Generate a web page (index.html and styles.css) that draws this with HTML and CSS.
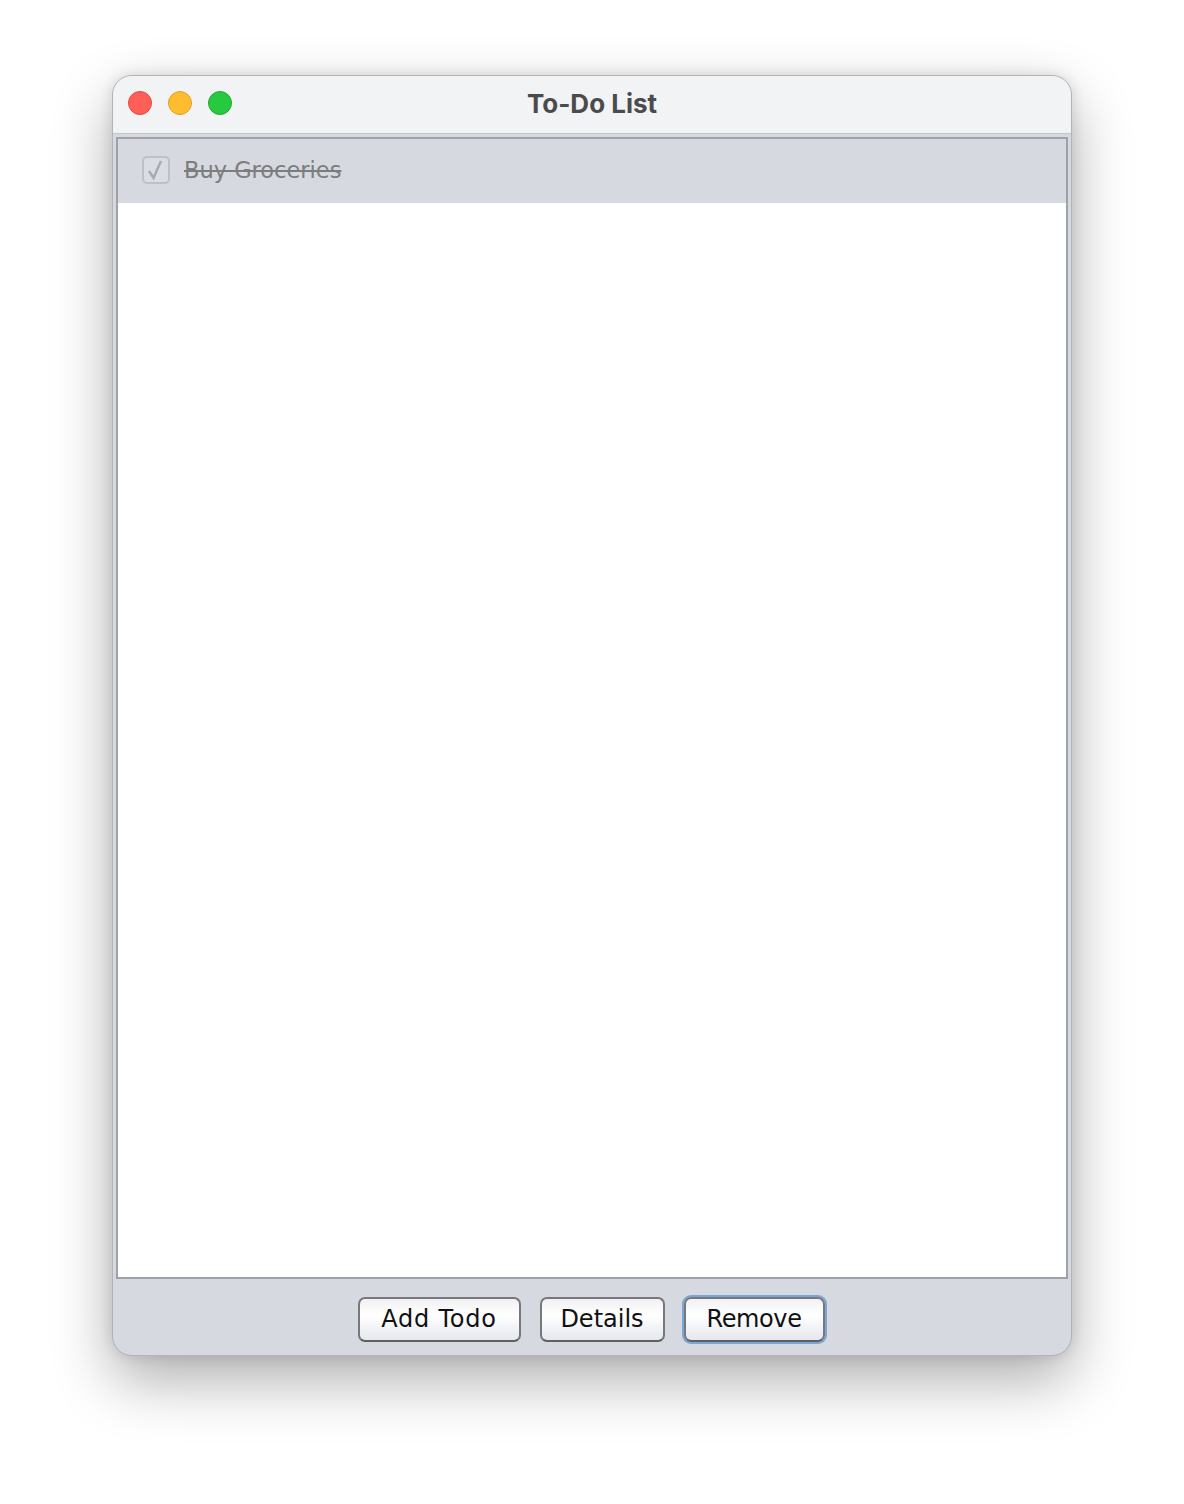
FILE: index.html
```html
<!DOCTYPE html>
<html lang="en">
<head>
<meta charset="utf-8">
<title>To-Do List</title>
<link rel="stylesheet" href="styles.css">
</head>
<body>
<div class="window">
  <div class="titlebar">
    <div class="lights">
      <span class="light red"></span>
      <span class="light yellow"></span>
      <span class="light green"></span>
    </div>
    <div class="title">To-Do List</div>
  </div>
  <div class="content">
    <div class="list">
      <div class="row selected">
        <span class="checkbox">
          <svg width="22" height="22" viewBox="0 0 22 22"><polyline points="4,12 8.5,19 16,2" fill="none" stroke="#a6aab2" stroke-width="2.4" stroke-linejoin="miter"/></svg>
        </span>
        <span class="label done">Buy Groceries</span>
      </div>
    </div>
    <div class="buttons">
      <button class="btn btn-add">Add Todo</button>
      <button class="btn btn-details">Details</button>
      <button class="btn btn-remove focused">Remove</button>
    </div>
  </div>
</div>
</body>
</html>
```
FILE: styles.css
```css
html, body {
  margin: 0;
  padding: 0;
  background: #ffffff;
}
body {
  width: 1184px;
  height: 1504px;
  padding: 75px 0 0 112px;
  box-sizing: border-box;
  overflow: hidden;
}
.window {
  width: 960px;
  height: 1281px;
  box-sizing: border-box;
  border: 1px solid #b3b3b6;
  border-radius: 20px;
  overflow: hidden;
  display: flex;
  flex-direction: column;
  background: #d6d9e0;
  box-shadow: 0 24px 60px rgba(0,0,0,0.32), 0 0 14px rgba(0,0,0,0.12);
}
.titlebar {
  height: 57px;
  flex: none;
  background: #f2f3f5;
  border-bottom: 1px solid #c4c6cc;
  display: flex;
  align-items: center;
  justify-content: center;
  position: relative;
}
.lights {
  position: absolute;
  left: 15px;
  top: 15px;
  display: flex;
  gap: 16px;
}
.light {
  width: 24px;
  height: 24px;
  border-radius: 50%;
  box-sizing: border-box;
}
.red { background: #ff5f57; border: 1px solid #e2463f; }
.yellow { background: #febc2e; border: 1px solid #dfa123; }
.green { background: #28c840; border: 1px solid #1daa2c; }
.title {
  font-family: Inter, "Open Sans", sans-serif;
  font-weight: 700;
  font-size: 26px;
  color: #4b4b4d;
  margin-top: -2px;
}
.content {
  flex: 1;
  display: flex;
  flex-direction: column;
  padding: 3px 3px 0 3px;
  min-height: 0;
}
.list {
  height: 1142px;
  flex: none;
  box-sizing: border-box;
  border: 2px solid #9da1aa;
  background: #ffffff;
}
.row {
  height: 64px;
  display: flex;
  align-items: center;
  padding-left: 24px;
}
.row.selected { background: #d6d9e0; }
.checkbox {
  width: 28px;
  height: 28px;
  box-sizing: border-box;
  border: 2px solid #bcc0c7;
  border-radius: 5px;
  background: #dadde3;
  display: flex;
  align-items: center;
  justify-content: center;
  margin-top: -2px;
}
.label {
  margin-left: 14px;
  font-family: "DejaVu Sans", sans-serif;
  font-size: 22.5px;
  color: #7d7d7f;
  margin-top: -2px;
}
.label.done {
  text-decoration: line-through;
  text-decoration-thickness: 2px;
}
.buttons {
  flex: 1;
  display: flex;
  justify-content: center;
  align-items: center;
  gap: 19px;
  padding-top: 4px;
  padding-right: 2px;
}
.btn {
  height: 45px;
  padding: 0;
  font-family: "DejaVu Sans", sans-serif;
  font-size: 24px;
  color: #111;
  border: 2px solid #76787d;
  border-bottom-color: #5e6064;
  border-radius: 7px;
  background: linear-gradient(#f1f1f3 0%, #ffffff 40%, #f6f7f9 60%, #e6e8ee 100%);
}
.btn-add { width: 163px; letter-spacing: 0.8px; }
.btn-details { width: 125px; }
.btn-remove { width: 141px; letter-spacing: -0.4px; }
.btn.focused {
  box-shadow: 0 0 0 2px #78a6d6;
}
```
